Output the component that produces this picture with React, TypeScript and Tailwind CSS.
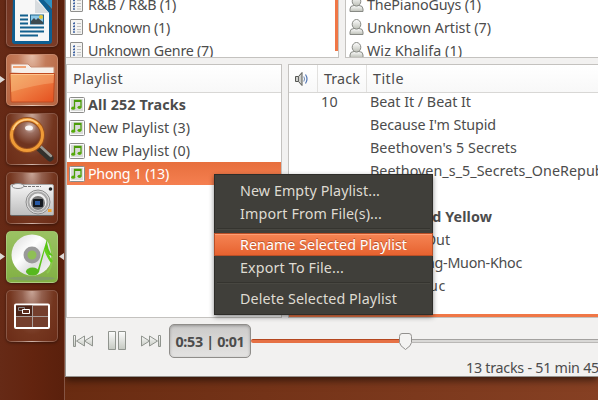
import { useLayoutEffect, useRef, type ReactNode } from "react";

/** Label whose tracking is adjusted so that it fills the given width. */
function Label({ text, w, className = "" }: { text: string; w: number; className?: string }) {
  const ref = useRef<HTMLSpanElement>(null);
  useLayoutEffect(() => {
    const el = ref.current;
    if (!el) return;
    el.style.letterSpacing = "0px";
    const natural = el.getBoundingClientRect().width;
    el.style.letterSpacing = `${(w - natural) / text.length}px`;
  }, [text, w]);
  return (
    <span ref={ref} className={`inline-block shrink-0 whitespace-pre ${className}`}>
      {text}
    </span>
  );
}

function Tile({ children, className = "" }: { children: ReactNode; className?: string }) {
  return (
    <div
      className={`relative h-[52px] w-[52px] shrink-0 overflow-hidden rounded-[5px] border border-[#ffffff30] bg-[#6f2e19] shadow-[0_1px_3px_#0006] ${className}`}
    >
      {children}
    </div>
  );
}

const gloss = "bg-[radial-gradient(ellipse_at_50%_0%,#c9a698_0%,#93604e_28%,#74361f_62%,#6b2c17_100%)]";

function WriterIcon() {
  return (
    <svg viewBox="0 0 50 50" className="h-full w-full">
      <path d="M6 0h28l11 14v31q0 3-3 3H8q-3 0-3-3z" fill="#0e5f92" />
      <path d="M33 0h12v13z" fill="#2f91c4" />
      <path d="M8 0h20l14 17v28H8z" fill="#f7f7f7" />
      <path d="M28 3v14h14z" fill="#d8dcdf" />
      <path d="M13 19.500h8M13 23.500h8M13 27.500h8M13 31.500h24M13 35.500h24M13 39.500h18" stroke="#13608e" strokeWidth="2" />
      <rect x="23.500" y="19" width="13" height="9" fill="#8cc8e8" stroke="#23688e" />
      <circle cx="34" cy="21" r="2" fill="#e8c433" />
      <path d="M24 28v-3l3-3 2 2 2-2 5 4v2z" fill="#3c4a50" />
    </svg>
  );
}

function FolderIcon() {
  return (
    <svg viewBox="0 0 50 50" className="h-full w-full">
      <defs>
        <linearGradient id="fold" x1="0" y1="0" x2="1" y2="1">
          <stop offset="0" stopColor="#f0a35c" />
          <stop offset=".5" stopColor="#ee7a40" />
          <stop offset="1" stopColor="#e4501f" />
        </linearGradient>
      </defs>
      <path d="M4 18V9h17l3 3h23v8z" fill="#f6efe9" stroke="#c58b70" />
      <path d="M6 12h13" stroke="#f0a374" strokeWidth="2" />
      <path d="M3 18.500h44.500L46.500 46q0 1-1 1H5q-1 0-1-1z" fill="url(#fold)" stroke="#c04b20" />
      <path d="M3.500 19H47l-.5 9Q27 30 4 37z" fill="#ffd9a0" opacity=".28" />
      <path d="M4 19.500h43" stroke="#ffc28c" />
    </svg>
  );
}

function SearchIcon() {
  return (
    <svg viewBox="0 0 50 50" className="h-full w-full">
      <defs>
        <radialGradient id="glass" cx=".6" cy=".25" r=".8">
          <stop offset="0" stopColor="#e6d6d0" />
          <stop offset=".25" stopColor="#9c7062" />
          <stop offset=".7" stopColor="#70341f" />
        </radialGradient>
      </defs>
      <path d="M31 33l12 11" stroke="#33302c" strokeWidth="7" strokeLinecap="round" />
      <path d="M32 31l12 11" stroke="#9a9790" strokeWidth="2.500" strokeLinecap="round" />
      <circle cx="20" cy="21" r="15.500" fill="url(#glass)" stroke="#99501e" strokeWidth="5" />
      <circle cx="20" cy="21" r="15.500" fill="none" stroke="#ef9b37" strokeWidth="3" />
      <path d="M6 16A15 15 0 0 1 31 10" fill="none" stroke="#ffd18a" strokeWidth="1.500" />
      <ellipse cx="22" cy="14" rx="4" ry="2.500" fill="#fff" opacity=".85" />
    </svg>
  );
}

function CameraIcon() {
  return (
    <svg viewBox="0 0 50 50" className="h-full w-full">
      <defs>
        <linearGradient id="cam" x2="0" y2="1">
          <stop offset="0" stopColor="#f5f5f5" />
          <stop offset="1" stopColor="#bdbdbd" />
        </linearGradient>
      </defs>
      <rect x="3.500" y="11.500" width="43" height="31" rx="1.500" fill="url(#cam)" stroke="#a5a5a5" />
      <path d="M4 42.500h42" stroke="#666" />
      <ellipse cx="11" cy="13" rx="6" ry="2.500" fill="#eee" stroke="#888" />
      <path d="M17 13.500h17" stroke="#777" strokeDasharray="3 1" />
      <circle cx="31" cy="29" r="12" fill="#dcdcdc" stroke="#8c8c8c" />
      <circle cx="31" cy="29" r="9.500" fill="#f0f0f0" stroke="#a8a8a8" strokeWidth="2" />
      <circle cx="31" cy="30" r="7" fill="#777" />
      <rect x="26" y="26" width="10" height="8" rx="1" fill="#15191f" />
      <rect x="28" y="28" width="5" height="4" fill="#2859a5" />
      <circle cx="43.500" cy="16" r="1.800" fill="#222" />
      <rect x="41" y="36" width="3.500" height="3" fill="#f2a431" />
    </svg>
  );
}

function MusicIcon() {
  return (
    <svg viewBox="0 0 50 50" className="h-full w-full">
      <defs>
        <linearGradient id="disc" x2="1" y2="1">
          <stop offset="0" stopColor="#d9d9d9" />
          <stop offset=".4" stopColor="#fff" />
          <stop offset=".65" stopColor="#dedede" />
          <stop offset="1" stopColor="#fff" />
        </linearGradient>
      </defs>
      <ellipse cx="25" cy="46.500" rx="23" ry="2" fill="#819f65" />
      <circle cx="25" cy="23" r="20.500" fill="url(#disc)" />
      <circle cx="25" cy="23" r="6.500" fill="#8fbf55" stroke="#9a9a9a" strokeWidth="4" />
      <path d="M41 7Q46 20 45 27Q44 38 40 41" fill="none" stroke="#8ac84c" strokeWidth="2" />
      <path d="M30 40L40 7Q40 18 46 24L42 23Q39 20 38 17L32 40z" fill="#59c516" />
      <path d="M38 17Q42 27 45 30" fill="none" stroke="#65cf1c" strokeWidth="2.500" />
      <ellipse cx="25.500" cy="39.500" rx="6.500" ry="4" fill="#58b81f" />
    </svg>
  );
}

function WorkspaceIcon() {
  return (
    <svg viewBox="0 0 50 50" className="h-full w-full">
      <rect x="8" y="13.500" width="34" height="23.500" rx="1" fill="#743f2d" stroke="#fff" strokeWidth="2" />
      <path d="M9 14.500h16v11H9z" fill="#4c2417" />
      <path d="M25.500 14v22M9 25.500h32" stroke="#aaa09c" />
      <path d="M11.500 16.500h6v3h-6z" fill="none" stroke="#8b8b8b" />
      <path d="M15.500 18.500h7v4h-7z" fill="#5b2d1e" stroke="#fff" />
    </svg>
  );
}

function GenreIcon() {
  return (
    <svg viewBox="0 0 13 17" className="h-[17px] w-[13px] shrink-0">
      <rect x=".5" y=".5" width="12" height="15" rx=".5" fill="#f4f4f2" stroke="#8f8f8d" />
      <path d="M3 4.500h2M3 7.500h2M3 10.500h2M3 13h2" stroke="#3e62a3" strokeWidth="1.300" />
      <path d="M4.500 3v11" stroke="#7791bb" strokeDasharray="1 2" />
      <path d="M7 4.500h4M7 7.500h4M7 10.500h4M7 13h4" stroke="#c2c2c2" />
    </svg>
  );
}

function PersonIcon() {
  return (
    <svg viewBox="0 0 15 17" className="h-[17px] w-[15px] shrink-0">
      <defs>
        <linearGradient id="person" x2="0" y2="1">
          <stop offset="0" stopColor="#fff" />
          <stop offset="1" stopColor="#bcbfb6" />
        </linearGradient>
      </defs>
      <path d="M1 15.500V13q0-3.500 4-3.500h5q4 0 4 3.500v2.500z" fill="url(#person)" stroke="#888a85" />
      <ellipse cx="7.500" cy="5.300" rx="4.300" ry="4.800" fill="url(#person)" stroke="#888a85" />
    </svg>
  );
}

function PlaylistIcon() {
  return (
    <svg viewBox="0 0 16 16" className="h-4 w-4 shrink-0">
      <rect x=".5" y=".5" width="15" height="15" rx="1" fill="#fafafa" stroke="#8c8c8a" />
      <rect x="2" y="2" width="12" height="12" fill="#d9dbd8" />
      <path d="M5.500 11V3.500h6.500V10" fill="none" stroke="#4a9c08" strokeWidth="1.300" />
      <path d="M5.500 4h6.500" stroke="#4a9c08" strokeWidth="2" />
      <ellipse cx="4.200" cy="11.200" rx="2" ry="1.600" fill="#55aa09" />
      <ellipse cx="10.500" cy="10.300" rx="2" ry="1.600" fill="#55aa09" />
    </svg>
  );
}

function SpeakerIcon() {
  return (
    <svg viewBox="0 0 14 14" className="h-[14px] w-[14px]">
      <path d="M.5 4.500h3l3.500-4v13l-3.500-4h-3z" fill="#cfd0cc" stroke="#555753" />
      <path d="M3.500 4.500v5" stroke="#666" />
      <path d="M8.800 4.500q1.500 2.500 0 5" fill="none" stroke="#6c87b0" />
      <path d="M10.500 2.500q3 4.500 0 9" fill="none" stroke="#5276b4" strokeWidth="1.200" />
    </svg>
  );
}

function Transport() {
  return (
    <svg viewBox="0 0 90 24" className="h-6 w-[90px] shrink-0">
      <defs>
        <linearGradient id="btn" x2="0" y2="1">
          <stop offset="0" stopColor="#fdfdfd" />
          <stop offset="1" stopColor="#c5c9c1" />
        </linearGradient>
      </defs>
      <g fill="url(#btn)" stroke="#90948e" strokeLinejoin="round">
        <path d="M.5 6.500h2v11h-2zM11.500 7v10l-8-5zM19.500 7v10l-8-5z" />
        <path d="M35.500 2.500h7v18h-7zM45.500 2.500h7v18h-7z" />
        <path d="M68.500 7v10l8-5zM76.500 7v10l8-5zM85.500 6.500h2v11h-2z" />
      </g>
    </svg>
  );
}

const playlists = [
  { text: "All 252 Tracks", w: 98, cls: "font-bold" },
  { text: "New Playlist (3)", w: 102, cls: "" },
  { text: "New Playlist (0)", w: 102, cls: "" },
];

function MenuItem({ text, w, active = false }: { text: string; w: number; active?: boolean }) {
  return (
    <div
      className={
        active
          ? "-mx-px flex h-[23px] items-center border border-[#b94f27] bg-linear-to-b from-[#f58453] to-[#e7622f] pl-[25px] text-white shadow-[inset_0_1px_0_#ff9d72] [text-shadow:0_-1px_0_#b9552f]"
          : "flex h-[23px] items-center pl-[25px]"
      }
    >
      <Label text={text} w={w} />
    </div>
  );
}

function Separator() {
  return <div className="mx-0.5 h-px shrink-0 border-0 bg-[#35342f] shadow-[0_1px_0_#484741]" />;
}

function ContextMenu() {
  return (
    <div className="absolute top-[174px] left-[214px] flex h-[141px] w-[219px] flex-col border border-[#2e2d29] bg-[#403f3a] pt-[4px] text-[#dfdbd2] shadow-[0_2px_5px_#0007]">
      <MenuItem text="New Empty Playlist..." w={140} />
      <MenuItem text="Import From File(s)..." w={142} />
      <div className="flex h-2 flex-col pt-[3px]"><Separator /></div>
      <MenuItem text="Rename Selected Playlist" w={167} active />
      <MenuItem text="Export To File..." w={104} />
      <div className="flex h-2 flex-col pt-[3px]"><Separator /></div>
      <MenuItem text="Delete Selected Playlist" w={157} />
    </div>
  );
}

export default function App() {
  return (
    <div className="relative flex h-[400px] w-[598px] overflow-hidden bg-linear-to-r from-[#66290f] to-[#864023] font-['Noto_Sans','Open_Sans',sans-serif] text-[14.3px] leading-[23px] text-[#4c4c4c]">
      <aside className="relative flex w-[65px] shrink-0 flex-col gap-[7px] border-r border-[#855443] bg-linear-to-r from-[#662a16] via-[#63240f] to-[#5a200c] pl-1.5">
        <Tile className="-mt-[5px] bg-linear-to-b from-[#733522] to-[#7b3b26]"><WriterIcon /></Tile>
        <Tile className="border-[#e2a284] bg-[radial-gradient(ellipse_at_50%_0%,#e5bda7_0%,#c37b5a_40%,#b66440_100%)]"><FolderIcon /></Tile>
        <Tile className={gloss}><SearchIcon /></Tile>
        <Tile className={gloss}><CameraIcon /></Tile>
        <Tile className="border-[#b9df87] bg-linear-to-b from-[#9bc263] to-[#82b043]"><MusicIcon /></Tile>
        <Tile className={gloss}><WorkspaceIcon /></Tile>
        <svg viewBox="0 0 65 400" className="absolute inset-0 h-[400px] w-[65px]">
          <path d="M0 76l5 3.500-5 3.500zM0 253l5 3.500-5 3.500zM64 253l-5 3.500 5 3.500z" fill="#ded9d6" />
        </svg>
      </aside>

      <main className="flex h-[377px] min-w-0 flex-1 flex-col overflow-hidden border-b border-l border-[#96938f] bg-[#f2f1f0] shadow-[0_3px_8px_#0009]">
        <section className="flex h-[58px] shrink-0 gap-1.5">
          <div className="flex w-[273px] shrink-0 justify-between overflow-hidden border-r border-b border-[#c4c2bf] bg-white">
            <div className="-mt-[7px] flex flex-col pl-1">
              {[["R&B / R&B (1)", 88], ["Unknown (1)", 82], ["Unknown Genre (7)", 125]].map(([t, w]) => (
                <div key={t} className="flex h-[23px] shrink-0 items-center gap-[5px]">
                  <GenreIcon />
                  <Label text={String(t)} w={Number(w)} />
                </div>
              ))}
            </div>
            <div className="h-[51px] w-[3px] bg-[#f07746]" />
          </div>
          <div className="min-w-0 flex-1 overflow-hidden border-b border-l border-[#c4c2bf] bg-white">
            <div className="-mt-[7px] flex flex-col pl-[3px]">
              {[["ThePianoGuys (1)", 114], ["Unknown Artist (7)", 124], ["Wiz Khalifa (1)", 95]].map(([t, w]) => (
                <div key={t} className="flex h-[23px] shrink-0 items-center gap-[3px]">
                  <PersonIcon />
                  <Label text={String(t)} w={Number(w)} />
                </div>
              ))}
            </div>
          </div>
        </section>

        <section className="mt-1.5 flex h-[254px] shrink-0 gap-1.5">
          <div className="w-[216px] shrink-0 overflow-hidden border border-[#c4c2bf] bg-white">
            <div className="flex h-7 items-center border-b border-[#d8d7d5] bg-linear-to-b from-white to-[#f8f8f8] pl-1.5">
              <Label text="Playlist" w={50} />
            </div>
            {playlists.map((p) => (
              <div key={p.text} className="flex h-[23px] items-center gap-[3px] pl-0.5">
                <PlaylistIcon />
                <Label text={p.text} w={p.w} className={p.cls} />
              </div>
            ))}
            <div className="flex h-[23px] items-center gap-[3px] bg-linear-to-b from-[#e76f3d] to-[#f57f50] pl-0.5 text-white">
              <PlaylistIcon />
              <Label text="Phong 1 (13)" w={81} />
            </div>
          </div>

          <div className="flex min-w-0 flex-1 flex-col overflow-hidden border border-r-0 border-[#c4c2bf] bg-white">
            <div className="z-10 flex h-7 shrink-0 items-center border-b border-[#d8d7d5] bg-linear-to-b from-white to-[#f8f8f8]">
              <div className="flex h-full w-[29px] items-center border-r border-[#e2e1df] pl-1.5"><SpeakerIcon /></div>
              <div className="flex h-full w-[49px] items-center border-r border-[#e2e1df] pl-1.5"><Label text="Track" w={36} /></div>
              <div className="flex h-full items-center pl-1.5"><Label text="Title" w={31} /></div>
            </div>
            <div className="-mt-[3px] flex min-h-0 flex-1 overflow-hidden">
              <div className="w-[81px] shrink-0 pl-8"><Label text="10" w={17} /></div>
              <div className="flex flex-col items-start">
                <Label text="Beat It / Beat It" w={101} />
                <Label text="Because I'm Stupid" w={126} />
                <Label text="Beethoven's 5 Secrets" w={147} />
                <Label text="Beethoven_s_5_Secrets_OneRepublic" w={248} />
                <div className="h-[23px] shrink-0" />
                <Label text="Black And Yellow" w={122} className="font-bold" />
                <Label text="Out" w={25} className="ml-[55px]" />
                <Label text="ng-Muon-Khoc" w={96} className="ml-[56px]" />
                <Label text="uc" w={17} className="ml-[59px]" />
              </div>
            </div>
            <div className="h-[3px] shrink-0 bg-[#f07746]" />
          </div>
        </section>

        <footer className="flex min-h-0 flex-1 flex-col">
          <div className="flex h-[46px] shrink-0 items-center pl-[7px]">
            <Transport />
            <div className="ml-1.5 flex h-[34px] w-[82px] shrink-0 items-center justify-center rounded-[5px] border border-[#8f8d8a] bg-linear-to-b from-[#cbcac9] to-[#e4e3e2] font-bold shadow-[inset_0_1px_3px_#0004]">
              <Label text="0:53 | 0:01" w={69} />
            </div>
            <div className="flex min-w-0 flex-1 items-center">
              <div className="h-1 w-[148px] shrink-0 rounded-l-full border-t border-[#b4471f] bg-[#e67145]" />
              <svg viewBox="0 0 13 17" className="h-[17px] w-[13px] shrink-0">
                <path d="M3 .5h7q2.500 0 2.500 3v6q0 3-6 7-6-4-6-7v-6q0-3 2.500-3z" fill="#f4f3f2" stroke="#92908e" />
              </svg>
              <div className="h-1 flex-1 border-t border-b border-t-[#a3a19f] border-b-[#bab8b6] bg-[#d9d8d6]" />
            </div>
          </div>
          <div className="-mt-[8px] pl-[400px]"><Label text="13 tracks - 51 min 45" w={133} /></div>
        </footer>
      </main>
      <ContextMenu />
    </div>
  );
}
